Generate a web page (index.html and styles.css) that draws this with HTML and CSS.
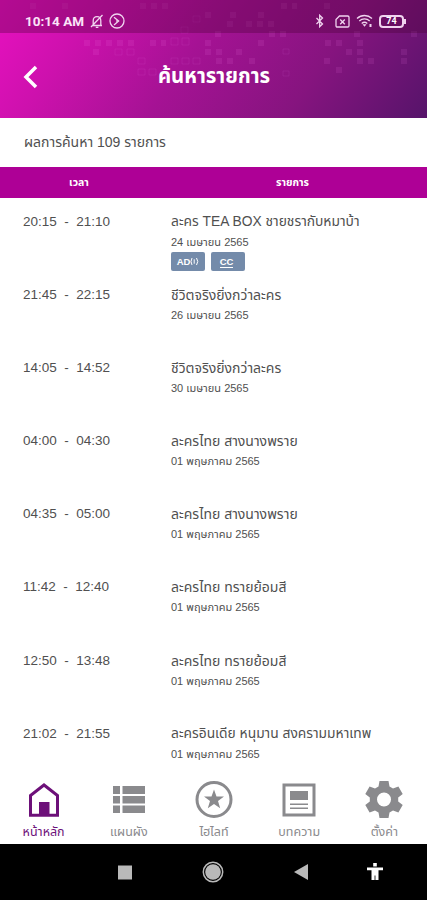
FILE: index.html
```html
<!DOCTYPE html>
<html lang="th">
<head>
  <meta charset="UTF-8" />
  <meta name="viewport" content="width=device-width, initial-scale=1.0"/>
  <title>ค้นหารายการ</title>
  <link rel="stylesheet" href="styles.css">
</head>
<body>
  <div class="screen">
    <header class="header">
      <svg class="pattern" viewBox="0 0 427 118" fill="none">
        <!-- solid squares -->
        <g stroke="#ff8cf5" stroke-opacity=".1" stroke-width="6" stroke-dasharray="6 5">
          <path d="M84 43h50M93 52h8M150 43h16M30 6h6M62 6h6M140 6h28M205 15h6M205 43h6M205 52h6"/>
          <path d="M281 6h16M324 6h6M230 15h6M258 15h6M227 24h8M246 24h28M215 34h6M269 34h17M354 34h6M411 34h6"/>
          <path d="M258 43h6M325 43h17M357 43h6M216 52h6M236 52h6M346 52h17M401 52h6M216 61h17M249 61h6M324 61h6M357 61h17M401 61h6M336 70h6"/>
        </g>
        <!-- outlined squares -->
        <g stroke="#ff8cf5" stroke-opacity=".09">
          <path d="M115 49h7v6h-7zM127 49h7v6h-7zM138 58h7v6h-7zM138 69h7v6h-7zM149 69h7v6h-7zM171 38h7v7h-7zM182 38h7v7h-7zM171 58h7v6h-7zM182 58h7v6h-7zM193 58h7v6h-7zM193 16h7v6h-7zM181 27h7v6h-7zM283 49h6v5h-6zM283 71h6v5h-6z"/>
        </g>
      </svg>
      <div class="status">
        <span class="clock">10:14 AM</span>
        <svg class="st-bell" width="14" height="15" viewBox="0 0 14 15">
          <path d="M2 11.5h10M3.2 11V6.7C3.2 4 4.7 2.6 7 2.6s3.8 1.4 3.8 4.1V11M5.8 13.4h2.6M1 13L12.5 1"/>
        </svg>
        <svg class="st-circle" width="16" height="16" viewBox="0 0 16 16">
          <circle cx="8" cy="8" r="7"/><path d="M5 4.3L9.6 8 5 12"/><path d="M9.6 8H7"/>
        </svg>
        <svg class="st-bt" width="10" height="14" viewBox="0 0 10 14">
          <path d="M1.5 4l6 6L4.7 12.7V1.3L7.5 4l-6 6"/>
        </svg>
        <svg class="st-sim" width="15" height="13" viewBox="0 0 15 13">
          <path d="M4.5 1h8.2q1.3 0 1.3 1.3v8.4q0 1.3-1.3 1.3H2.3Q1 12 1 10.7V4.5zM5.2 4.5l4.6 4.7M9.8 4.5L5.2 9.2"/>
        </svg>
        <svg class="st-wifi" width="17" height="14" viewBox="0 0 17 14">
          <path d="M1 4.500c4.300-4 10.700-4 15 0M3.300 7c3-2.800 7.400-2.800 10.400 0M5.700 9.500c1.700-1.500 3.900-1.500 5.600 0"/>
          <path class="fill" d="M6.500 10.200h4l-2 2.500zM13.500 10h2v3h-2z"/>
        </svg>
        <div class="battery">74</div>
      </div>
      <div class="titlebar">
        <svg class="back" width="16" height="24" viewBox="0 0 16 24"><path d="M13 2L3 12l10 10"/></svg>
        <h1>ค้นหารายการ</h1>
      </div>
    </header>

    <main>
      <p class="result">ผลการค้นหา 109 รายการ</p>
      <div class="table-head">
        <div>เวลา</div>
        <div>รายการ</div>
      </div>
      <ul class="list">
        <li>
          <time>20:15 &nbsp;-&nbsp; 21:10</time>
          <div class="info">
            <h2 class="long">ละคร TEA BOX ชายชรากับหมาบ้า</h2>
            <p>24 เมษายน 2565</p>
            <div class="tags">
              <span class="tag">AD<svg width="9" height="9" viewBox="0 0 9 9"><path d="M2 1q-2 3.500 0 7M6.500 1q2.500 3.500 0 7M4.200 2.300v4.400"/></svg></span>
              <span class="tag"><span class="cc">CC</span></span>
            </div>
          </div>
        </li>
        <li>
          <time>21:45 &nbsp;-&nbsp; 22:15</time>
          <div class="info"><h2>ชีวิตจริงยิ่งกว่าละคร</h2><p>26 เมษายน 2565</p></div>
        </li>
        <li>
          <time>14:05 &nbsp;-&nbsp; 14:52</time>
          <div class="info"><h2>ชีวิตจริงยิ่งกว่าละคร</h2><p>30 เมษายน 2565</p></div>
        </li>
        <li>
          <time>04:00 &nbsp;-&nbsp; 04:30</time>
          <div class="info"><h2>ละครไทย สางนางพราย</h2><p>01 พฤษภาคม 2565</p></div>
        </li>
        <li>
          <time>04:35 &nbsp;-&nbsp; 05:00</time>
          <div class="info"><h2>ละครไทย สางนางพราย</h2><p>01 พฤษภาคม 2565</p></div>
        </li>
        <li>
          <time>11:42 &nbsp;-&nbsp; 12:40</time>
          <div class="info"><h2>ละครไทย ทรายย้อมสี</h2><p>01 พฤษภาคม 2565</p></div>
        </li>
        <li>
          <time>12:50 &nbsp;-&nbsp; 13:48</time>
          <div class="info"><h2>ละครไทย ทรายย้อมสี</h2><p>01 พฤษภาคม 2565</p></div>
        </li>
        <li>
          <time>21:02 &nbsp;-&nbsp; 21:55</time>
          <div class="info"><h2 class="long">ละครอินเดีย หนุมาน สงครามมหาเทพ</h2><p>01 พฤษภาคม 2565</p></div>
        </li>
      </ul>
    </main>

    <nav class="tabs">
      <a class="tab active">
        <svg width="40" height="40" viewBox="0 0 40 40">
          <path class="line" d="M6.500 35.200V15.500L20 5l13.500 10.500v19.700z"/><path d="M15 22h10.500v13H15z"/>
        </svg>
        <span>หน้าหลัก</span>
      </a>
      <a class="tab">
        <svg width="40" height="40" viewBox="0 0 40 40">
          <path d="M4 6h7v8H4zM13.500 6H36v8H13.500zM4 16h7v7.500H4zM13.500 16H36v7.500H13.500zM4 25.500h7v7.500H4zM13.500 25.500H36v7.500H13.500z"/>
        </svg>
        <span>แผนผัง</span>
      </a>
      <a class="tab">
        <svg width="40" height="40" viewBox="0 0 40 40">
          <circle class="line" cx="20" cy="19.500" r="17"/>
          <path d="M20 9.500l2.500 7h7.500l-6 4.600 2.200 7.200-6.200-4.300-6.200 4.300 2.200-7.200-6-4.600h7.500z"/>
        </svg>
        <span>ไฮไลท์</span>
      </a>
      <a class="tab">
        <svg width="40" height="40" viewBox="0 0 40 40">
          <path class="line" d="M5 5h30v30H5z"/><path d="M11 11h18v9H11zM11 23.500h18V25H11zM11 27.500h18V29H11z"/>
        </svg>
        <span>บทความ</span>
      </a>
      <a class="tab">
        <svg width="40" height="40" viewBox="0 0 40 40">
          <path fill-rule="evenodd" d="M15.500 1h9l1 5.600 3.500 2 5.400-2 4.300 7.400-4.500 3.500v4l4.500 3.500-4.300 7.400-5.400-2-3.500 2-1 5.600h-9l-1-5.600-3.500-2-5.400 2L1.300 25l4.500-3.500v-4L1.300 14l4.300-7.400 5.400 2 3.500-2zM20 12.500a7 7 0 1 0 0 14 7 7 0 0 0 0-14z"/>
        </svg>
        <span>ตั้งค่า</span>
      </a>
    </nav>

    <div class="sysbar">
      <svg width="16" height="16" viewBox="0 0 16 16"><path d="M1 1.500h14v14H1z"/></svg>
      <svg width="24" height="24" viewBox="0 0 24 24"><circle cx="12" cy="12" r="7.800"/><circle class="ring" cx="12" cy="12" r="9.700"/></svg>
      <svg width="16" height="18" viewBox="0 0 16 18"><path d="M15 1v16L1 9z"/></svg>
      <svg class="white" width="18" height="18" viewBox="0 0 18 18"><path d="M7.200 0h3.600v3.500H7.200zM1 4.500h16v2.700h-4.500V17H5.500V7.200H1z"/><path class="gap" d="M8 12.500h2V17H8z"/></svg>
    </div>
  </div>
</body>
</html>
```
FILE: styles.css
```css
* {
  box-sizing: border-box;
}

body {
  margin: 0;
  background: #fff;
  color: #505050;
  font-family: "Liberation Sans", "Noto Sans Thai", "Noto Sans", sans-serif;
}

h1, h2, p, ul {
  margin: 0;
  padding: 0;
  font-weight: normal;
}

.screen {
  width: 427px;
  height: 900px;
  display: flex;
  flex-direction: column;
  overflow: hidden;
}

/* header */
.header {
  position: relative;
  flex: none;
  height: 118px;
  background: linear-gradient(125deg, #e811c0 0%, #cd11ad 20%, #a51294 45%, #86147f 72%, #56146a 100%);
  color: #fff;
}

.pattern {
  position: absolute;
  inset: 0;
}

.status {
  position: relative;
  display: flex;
  align-items: center;
  height: 33px;
  padding: 9px 20px 0 25px;
  background: rgba(70, 0, 50, 0.32);
}

.status svg {
  fill: none;
  stroke: #f0d4ef;
  stroke-width: 1.3;
}

.status .fill {
  fill: #f0d4ef;
  stroke: none;
}

.clock {
  width: 60px;
  font: bold 13.500px Roboto, sans-serif;
  color: #fbe4f8;
  white-space: nowrap;
}

.st-bell {
  margin-left: 5px;
}

.st-circle {
  margin-left: 5px;
}

.st-bt {
  margin-left: auto;
}

.st-sim {
  margin-left: 10px;
}

.st-wifi {
  margin-left: 6px;
}

.battery {
  position: relative;
  width: 25px;
  height: 13px;
  margin: 0 3px 0 6px;
  border: 2px solid #f0d4ef;
  border-radius: 4px;
  font: bold 9px/9px Roboto, sans-serif;
  text-align: center;
}

.battery::after {
  content: "";
  position: absolute;
  right: -4px;
  top: 2px;
  width: 2px;
  height: 5px;
  background: #f0d4ef;
}

.titlebar {
  position: relative;
  display: flex;
  align-items: center;
  height: 85px;
  padding: 2px 38px 0 23px;
}

.back {
  fill: none;
  stroke: #fff;
  stroke-width: 3.5;
}

.titlebar h1 {
  flex: 1;
  text-align: center;
  font-size: 20.400px;
  font-weight: bold;
}

/* result list */
main {
  flex: 1;
  overflow: hidden;
}

.result {
  height: 49px;
  padding-left: 24px;
  font-size: 14px;
  line-height: 48px;
}

.table-head {
  display: grid;
  grid-template-columns: 158px 1fr;
  height: 31px;
  background: #ae0096;
  color: #fff;
  font-size: 10.500px;
  font-weight: bold;
  line-height: 30px;
  text-align: center;
}

.list {
  list-style: none;
}

.list li {
  display: grid;
  grid-template-columns: 148px 1fr;
  height: 73.1px;
  padding: 12px 0 0 23px;
}

.list time,
.list h2 {
  font-size: 14px;
  line-height: 22px;
  white-space: nowrap;
}

.list time {
  padding-top: 1px;
  font-size: 13.500px;
}

.list h2 {
  height: 22px;
  line-height: 24px;
}

.list h2.long {
  font-size: 13.800px;
}

.info p {
  font-size: 11px;
  line-height: 20px;
  white-space: nowrap;
}

.tags {
  display: flex;
  gap: 6px;
}

.tag {
  display: flex;
  align-items: center;
  justify-content: center;
  width: 34px;
  height: 19px;
  border-radius: 2px;
  background: #748baa;
  color: #fff;
  font-size: 9.500px;
  font-weight: bold;
}

.tag svg {
  fill: none;
  stroke: #fff;
}

.cc {
  margin-right: 3px;
  border-bottom: 1px solid #fff;
  line-height: 11px;
}

/* bottom tabs */
.tabs {
  flex: none;
  display: grid;
  grid-template-columns: repeat(5, 1fr);
  height: 64px;
  padding-left: 1px;
  background: #fff;
}

.tab {
  display: flex;
  flex-direction: column;
  align-items: center;
  color: #8a8a8d;
  font-size: 12.500px;
  line-height: 24px;
}

.tab svg {
  flex: none;
  fill: #8a8a8d;
}

.tab .line {
  fill: none;
  stroke: #8a8a8d;
  stroke-width: 3;
}

.tab.active {
  color: #6d1079;
}

.tab.active svg {
  fill: #6d1079;
}

.tab.active .line {
  fill: none;
  stroke: #6d1079;
}

/* android buttons */
.sysbar {
  flex: none;
  display: grid;
  grid-template-columns: 88px 88px 87px 61px;
  align-items: center;
  justify-items: center;
  height: 56px;
  padding-left: 81px;
  background: #000;
}

.sysbar svg {
  fill: #b9b9b9;
}

.sysbar .ring {
  fill: none;
  stroke: #b9b9b9;
  stroke-width: 1.5;
}

.sysbar .white {
  fill: #fff;
}

.sysbar .gap {
  fill: #999;
}
```
